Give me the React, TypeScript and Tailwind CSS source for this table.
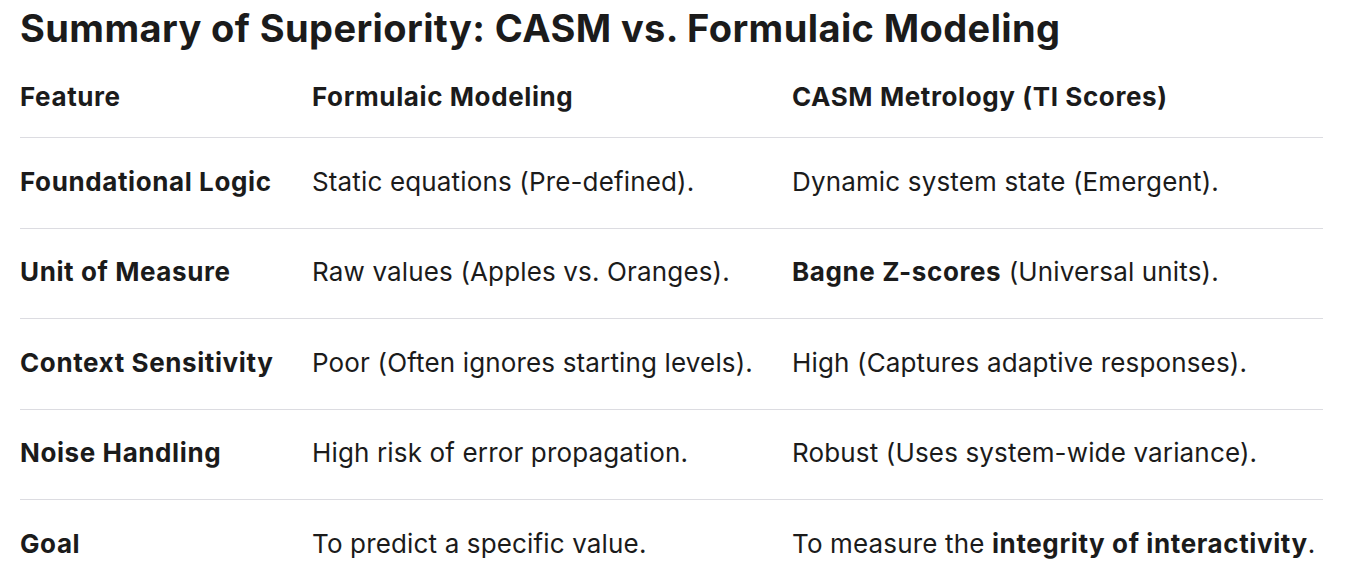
import React from "react";

type Row = { feature: string; formula: React.ReactNode; casm: React.ReactNode };

const rows: Row[] = [
  {
    feature: "Foundational Logic",
    formula: "Static equations (Pre-defined).",
    casm: "Dynamic system state (Emergent).",
  },
  {
    feature: "Unit of Measure",
    formula: "Raw values (Apples vs. Oranges).",
    casm: (
      <>
        <b className="font-bold tracking-[0.6px]">Bagne Z-scores</b> (Universal units).
      </>
    ),
  },
  {
    feature: "Context Sensitivity",
    formula: "Poor (Often ignores starting levels).",
    casm: "High (Captures adaptive responses).",
  },
  {
    feature: "Noise Handling",
    formula: "High risk of error propagation.",
    casm: "Robust (Uses system-wide variance).",
  },
  {
    feature: "Goal",
    formula: "To predict a specific value.",
    casm: (
      <>
        To measure the <b className="font-bold tracking-[0.6px]">integrity of interactivity</b>.
      </>
    ),
  },
];

export default function App() {
  return (
    <div
      className="min-h-screen bg-white pl-5 text-[#1b1b1b]"
      style={{ fontFamily: "Inter, 'Open Sans', sans-serif" }}
    >
      {/* Title */}
      <h1 className="pt-[6px] h-[57px] text-[38px] font-bold leading-[44px] tracking-[0.4px]">
        Summary of Superiority: CASM vs. Formulaic Modeling
      </h1>

      {/* Table */}
      <div className="w-[1303px] text-[26px] tracking-[0.15px]">
        <div className="grid h-[80px] grid-cols-[292px_480px_1fr] items-center pb-[2px] font-bold tracking-[0.6px]">
          <div>Feature</div>
          <div>Formulaic Modeling</div>
          <div>CASM Metrology (TI Scores)</div>
        </div>
        {rows.map((r) => (
          <div
            key={r.feature}
            className="grid h-[90.5px] grid-cols-[292px_480px_1fr] items-center border-t border-[#dcdce1] pb-[3px]"
          >
            <div className="font-bold tracking-[0.6px]">{r.feature}</div>
            <div>{r.formula}</div>
            <div>{r.casm}</div>
          </div>
        ))}
      </div>
    </div>
  );
}
